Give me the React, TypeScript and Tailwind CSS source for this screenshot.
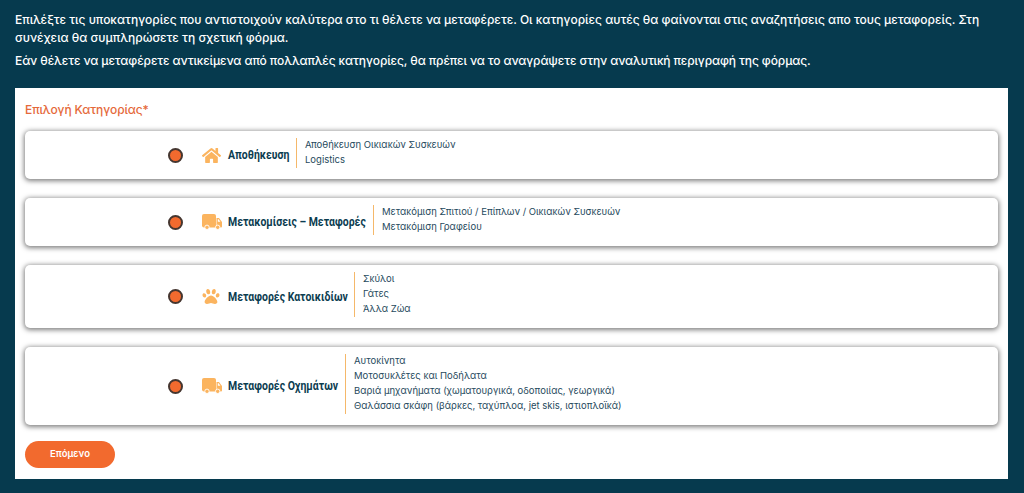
import React from 'react';
import { FaHome, FaPaw } from 'react-icons/fa';

const TruckIcon = ({ className }: { className?: string }) => (
  <svg viewBox="0 0 20 16" className={className} fill="currentColor">
    <path d="M2 0h10a2 2 0 0 1 2 2v11.5H2a2 2 0 0 1-2-2V2a2 2 0 0 1 2-2z" />
    <path d="M14.5 4H17l3 4v4.500a1 1 0 0 1-1 1h-4.500z" />
    <path d="M15.800 5.300h.8l1.800 2.500h-2.600z" fill="#fff" />
    <circle cx="5" cy="13.300" r="2.200" stroke="#fff" strokeWidth="0.900" />
    <circle cx="15.700" cy="13.300" r="2.200" stroke="#fff" strokeWidth="0.900" />
  </svg>
);

const categories = [
  { title: 'Αποθήκευση', icon: FaHome, iconSize: 'h-[17px] w-[19px]', titleWidth: 'w-[62px]', items: ['Αποθήκευση Οικιακών Συσκευών', 'Logistics'] },
  { title: 'Μετακομίσεις – Μεταφορές', icon: TruckIcon, iconSize: 'h-[16px] w-[20px]', titleWidth: 'w-[139px]', items: ['Μετακόμιση Σπιτιού / Επίπλων / Οικιακών Συσκευών', 'Μετακόμιση Γραφείου'] },
  { title: 'Μεταφορές Κατοικιδίων', icon: FaPaw, iconSize: 'h-[17px] w-[18px]', titleWidth: 'w-[120px]', items: ['Σκύλοι', 'Γάτες', 'Άλλα Ζώα'] },
  {
    title: 'Μεταφορές Οχημάτων',
    icon: TruckIcon,
    iconSize: 'h-[16px] w-[20px]',
    titleWidth: 'w-[111px]',
    items: [
      'Αυτοκίνητα',
      'Μοτοσυκλέτες και Ποδήλατα',
      'Βαριά μηχανήματα (χωματουργικά, οδοποιίας, γεωργικά)',
      'Θαλάσσια σκάφη (βάρκες, ταχύπλοα, jet skis, ιστιοπλοϊκά)',
    ],
  },
];

export default function App() {
  return (
    <div className="h-[493px] w-[1024px] overflow-hidden bg-[#063a4e] px-[15px] pt-[11px] font-['Inter','Noto_Sans',sans-serif]">
      {/* Intro */}
      <div className="h-[77px] text-[12px] font-medium leading-[18px] text-white">
        <p>
          Επιλέξτε τις υποκατηγορίες που αντιστοιχούν καλύτερα στο τι θέλετε να μεταφέρετε. Οι κατηγορίες αυτές θα φαίνονται στις αναζητήσεις απο τους μεταφορείς. Στη συνέχεια θα συμπληρώσετε τη σχετική φόρμα.
        </p>
        <p className="mt-[5px] tracking-[-0.1px]">
          Εάν θέλετε να μεταφέρετε αντικείμενα από πολλαπλές κατηγορίες, θα πρέπει να το αναγράψετε στην αναλυτική περιγραφή της φόρμας.
        </p>
      </div>

      {/* Form panel */}
      <div className="h-[391px] w-[993px] bg-white px-[10px] pt-[14px]">
        <h2 className="h-[29px] text-[12px] font-medium leading-[16px] tracking-[-0.1px] text-[#e5693a]">Επιλογή Κατηγορίας*</h2>

        <div className="flex flex-col gap-[19px]">
          {categories.map(cat => {
            const Icon = cat.icon;
            return (
              <div
                key={cat.title}
                className="flex items-center rounded-[5px] bg-white pl-[143px] shadow-[0_1px_5px_1px_rgba(0,0,0,0.5)]"
              >
                <span className="h-[15px] w-[15px] shrink-0 rounded-full border-2 border-[#453630] bg-[#f26a2e]" />
                <span className="ml-[19px] flex w-[21px] shrink-0 items-center">
                  <Icon className={`${cat.iconSize} shrink-0 text-[#fbb45f]`} />
                </span>
                <span className={`ml-[5px] shrink-0 ${cat.titleWidth}`}>
                  <span className="inline-block origin-left -translate-y-[2px] scale-x-[0.805] whitespace-nowrap font-['Roboto',sans-serif] text-[13px] font-bold text-[#0b3c50]">
                    {cat.title}
                  </span>
                </span>
                <div className="mb-[11px] ml-[6px] mt-[7px] border-l border-[#f5b86a] pl-[8px] text-[9.5px] leading-[15px] text-[#1f4a5d]">
                  {cat.items.map(item => (
                    <div key={item} className="-translate-y-px">{item}</div>
                  ))}
                </div>
              </div>
            );
          })}
        </div>

        <button className="mt-[16px] h-[27px] w-[90px] rounded-full bg-[#f26a2e] text-[9.5px] font-semibold text-white">
          Επόμενο
        </button>
      </div>
    </div>
  );
}
